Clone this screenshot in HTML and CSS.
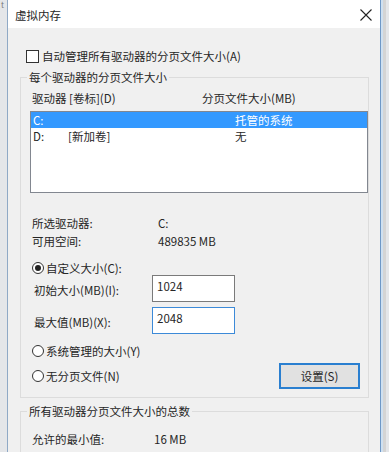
FILE: index.html
```html
<!DOCTYPE html>
<html lang="zh-CN">
<head>
    <meta charset="UTF-8">
    <title>虚拟内存</title>
    <link rel="stylesheet" href="styles.css">
</head>
<body>

    <!-- 背后窗口的一点残影 -->
    <div class="behind">t</div>

    <div class="window">
        <!-- 标题栏 -->
        <div class="titlebar">
            <span class="title">虚拟内存</span>
            <svg class="close" width="12" height="12" viewBox="0 0 12 12">
                <path d="M0.5 0.5 L11.5 11.5 M11.5 0.5 L0.5 11.5" stroke="#222" stroke-width="1.1" fill="none"/>
            </svg>
        </div>

        <div class="content">
            <label class="check-row">
                <span class="checkbox"></span>
                <span>自动管理所有驱动器的分页文件大小(A)</span>
            </label>

            <!-- 每个驱动器 -->
            <div class="group group-drives">
                <span class="group-title">每个驱动器的分页文件大小</span>

                <div class="list-head">
                    <span class="col-drive">驱动器 [卷标](D)</span>
                    <span>分页文件大小(MB)</span>
                </div>

                <div class="listbox">
                    <div class="list-row selected">
                        <span class="c1">C:</span>
                        <span class="c2"></span>
                        <span>托管的系统</span>
                    </div>
                    <div class="list-row">
                        <span class="c1">D:</span>
                        <span class="c2">[新加卷]</span>
                        <span>无</span>
                    </div>
                </div>

                <div class="info">
                    <div class="info-row"><span class="info-label">所选驱动器:</span><span>C:</span></div>
                    <div class="info-row"><span class="info-label">可用空间:</span><span>489835 MB</span></div>
                </div>

                <div class="radio-row first">
                    <span class="radio checked"></span>
                    <span>自定义大小(C):</span>
                </div>

                <div class="field-row">
                    <span class="field-label">初始大小(MB)(I):</span>
                    <div class="textbox">1024</div>
                </div>
                <div class="field-row second">
                    <span class="field-label">最大值(MB)(X):</span>
                    <div class="textbox focus">2048</div>
                </div>

                <div class="radio-row sys">
                    <span class="radio"></span>
                    <span>系统管理的大小(Y)</span>
                </div>

                <div class="bottom-row">
                    <div class="radio-row">
                        <span class="radio"></span>
                        <span>无分页文件(N)</span>
                    </div>
                    <button class="btn">设置(S)</button>
                </div>
            </div>

            <!-- 总数 -->
            <div class="group group-total">
                <span class="group-title">所有驱动器分页文件大小的总数</span>
                <div class="info-row total-row"><span class="total-label">允许的最小值:</span><span>16 MB</span></div>
            </div>
        </div>
    </div>

</body>
</html>
```

FILE: styles.css
```css
/* 基本 */
body {
    margin: 0;
    height: 452px;
    overflow: hidden;
    background-color: #e4e6e9;
    font-family: "Noto Sans CJK SC", "Noto Sans", sans-serif;
    font-size: 11.5px;
    color: #262626;
    position: relative;
}

.behind {
    position: absolute;
    top: 0;
    left: 1px;
    font-size: 8px;
    line-height: 9px;
    color: #777;
}

.window {
    margin-left: 7px;
    width: 372px;
    height: 452px;
    background-color: #f0f0f0;
    border-left: 1px solid #8fa9c6;
    border-right: 1px solid #6f98c6;
    box-shadow: 2px 0 0 #cfe0f0, 5px 0 0 #d4d4d4;
}

/* 标题栏 */
.titlebar {
    height: 28px;
    background-color: #fff;
    display: flex;
    align-items: center;
    justify-content: space-between;
    padding: 0 8px 0 7px;
}
.title {
    margin-top: 1px;
}
.close {
    margin-top: 2px;
}

.content {
    padding: 0 11px 0 12px;
}

/* 复选框 */
.check-row {
    display: flex;
    align-items: center;
    height: 16px;
    margin-top: 20px;
    padding-left: 6px;
}
.checkbox {
    width: 11px;
    height: 11px;
    border: 1px solid #333;
    background-color: #fff;
    margin-right: 3px;
}

/* 分组框 */
.group {
    position: relative;
    border: 1px solid #dcdcdc;
}
.group-title {
    position: absolute;
    top: -9px;
    left: 6px;
    padding: 0 2px;
    background-color: #f0f0f0;
    line-height: 16px;
}

.group-drives {
    margin-top: 13px;
    padding: 0 0 8px 11px;
}

.list-head {
    display: flex;
    height: 16px;
    line-height: 16px;
    margin-top: 12px;
}
.col-drive {
    width: 170px;
}

.listbox {
    margin-top: 5px;
    margin-left: -2px;
    height: 80px;
    border: 1px solid #828790;
    background-color: #fff;
}
.list-row {
    display: flex;
    height: 16px;
    line-height: 16px;
    padding-left: 2px;
}
.list-row.selected {
    background-color: #3399ff;
    color: #fff;
}
.c1 {
    width: 35px;
}
.c2 {
    width: 167px;
}

.info {
    margin-top: 21px;
}
.info-row {
    display: flex;
    height: 18px;
    line-height: 18px;
}
.info-label {
    width: 126px;
}

/* 单选 */
.radio-row {
    display: flex;
    align-items: center;
    height: 16px;
}
.radio-row.first {
    margin-top: 10px;
    height: 15px;
}
.radio-row.sys {
    margin-top: 9px;
}
.radio {
    width: 10px;
    height: 10px;
    border: 1px solid #333;
    border-radius: 50%;
    background-color: #fff;
    margin-right: 2px;
    position: relative;
}
.radio.checked::after {
    content: "";
    position: absolute;
    left: 2px;
    top: 2px;
    width: 6px;
    height: 6px;
    border-radius: 50%;
    background-color: #222;
}

/* 输入框 */
.field-row {
    display: flex;
    align-items: center;
    height: 27px;
}
.field-row.second {
    margin-top: 5px;
}
.field-label {
    width: 118px;
    padding-left: 2px;
    margin-top: 3px;
}
.textbox {
    width: 77px;
    height: 23px;
    border: 1px solid #7a7a7a;
    background-color: #fff;
    padding: 2px 0 0 4px;
    line-height: 16px;
}
.textbox.focus {
    border-color: #3c8ad8;
}

.bottom-row {
    display: flex;
    align-items: center;
    justify-content: space-between;
    height: 26px;
    margin-top: 4px;
    padding-right: 8px;
}
.btn {
    width: 81px;
    height: 26px;
    font-family: inherit;
    font-size: 11.5px;
    color: #262626;
    background-color: #e1e1e1;
    border: 2px solid #2a7fd0;
    padding: 0;
}

.group-total {
    margin-top: 13px;
    height: 60px;
    padding-left: 11px;
}
.total-row {
    margin-top: 18px;
}
.total-label {
    width: 122px;
}
```
